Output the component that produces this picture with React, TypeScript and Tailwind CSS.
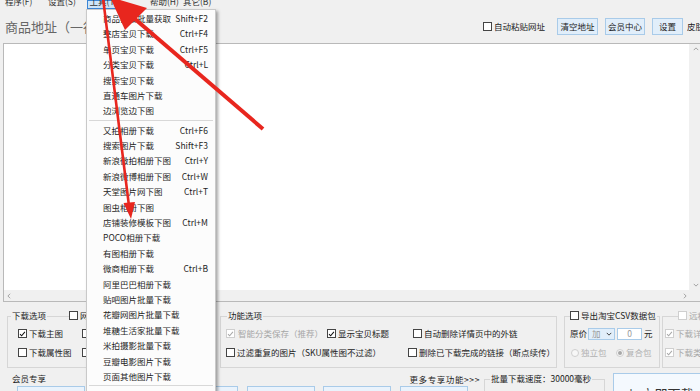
import clsx from 'clsx';
import type { ReactNode } from 'react';

type Item = [string, string?] | null;

const MENU: Item[] = [
  ['商品链接批量获取', 'Shift+F2'],
  ['整店宝贝下载', 'Ctrl+F4'],
  ['单页宝贝下载', 'Ctrl+F5'],
  ['分类宝贝下载', 'Ctrl+L'],
  ['搜索宝贝下载'],
  ['直通车图片下载'],
  ['边浏览边下图'],
  null,
  ['又拍相册下载', 'Ctrl+F6'],
  ['搜索图片下载', 'Shift+F3'],
  ['新浪微拍相册下图', 'Ctrl+Y'],
  ['新浪微博相册下图', 'Ctrl+W'],
  ['天堂图片网下图', 'Ctrl+T'],
  ['图虫相册下图'],
  ['店铺装修模板下图', 'Ctrl+M'],
  ['POCO相册下载'],
  ['有图相册下载'],
  ['微商相册下载', 'Ctrl+B'],
  ['阿里巴巴相册下载'],
  ['贴吧图片批量下载'],
  ['花瓣网图片批量下载'],
  ['堆糖生活家批量下载'],
  ['米拍摄影批量下载'],
  ['豆瓣电影图片下载'],
  ['页面其他图片下载'],
  null,
];

function Box({ checked, disabled }: { checked?: boolean; disabled?: boolean }) {
  return (
    <span
      className={clsx(
        'flex h-[9px] w-[9px] shrink-0 items-center justify-center border bg-white',
        disabled ? 'border-[#cfcfcf]' : 'border-[#444]'
      )}
    >
      {checked && (
        <svg viewBox="0 0 9 9" className="h-[8px] w-[8px]">
          <path d="M1.3 4.6 L3.4 6.8 L7.6 1.8" fill="none" stroke={disabled ? '#a8a8a8' : '#111'} strokeWidth="1.3" />
        </svg>
      )}
    </span>
  );
}

function Check({ label, checked, disabled, className }: { label: string; checked?: boolean; disabled?: boolean; className?: string }) {
  return (
    <div className={clsx('flex items-center gap-[2px] whitespace-nowrap', className)}>
      <Box checked={checked} disabled={disabled} />
      <span className={disabled ? 'text-[#a6a6a6]' : 'text-[#222]'}>{label}</span>
    </div>
  );
}

function Radio({ label, on, className }: { label: string; on?: boolean; className?: string }) {
  return (
    <div className={clsx('flex items-center gap-[2px] whitespace-nowrap text-[#b0b0b0]', className)}>
      <span className="flex h-[8px] w-[8px] items-center justify-center rounded-full border border-[#cfcfcf] bg-[#f7f7f7]">
        {on && <span className="h-[4px] w-[4px] rounded-full bg-[#a8a8a8]" />}
      </span>
      <span>{label}</span>
    </div>
  );
}

function Group({ title, className, children }: { title?: ReactNode; className?: string; children: ReactNode }) {
  return (
    <div className={clsx('relative shrink-0 border border-[#d6d6d6]', className)}>
      {title}
      {children}
    </div>
  );
}

function Btn({ children, className }: { children: ReactNode; className?: string }) {
  return (
    <div className={clsx('flex h-[17px] shrink-0 items-center justify-center border border-[#a9cbe9] bg-[#e1eefa] text-[#222]', className)}>
      {children}
    </div>
  );
}

export default function App() {
  return (
    <div className="relative h-[391px] w-[700px] overflow-hidden bg-[#f0f0f0] font-['Noto_Sans_CJK_SC','Noto_Sans',sans-serif] text-[8.5px] leading-none text-[#222]">
      {/* menu bar */}
      <div className="flex h-[10px] items-start overflow-hidden text-[#333]">
        <span className="-mt-[3px] ml-[5px] w-[43px]">程序(F)</span>
        <span className="-mt-[3px] w-[39px]">设置(S)</span>
        <span className="flex h-[9px] w-[33px] items-start justify-center border border-[#3c86d6] bg-[#cde4f8]">
          <span className="-mt-[4px]">工具(T)</span>
        </span>
        <span className="-mt-[3px] ml-[30px] w-[33px]">帮助(H)</span>
        <span className="-mt-[3px]">其它(B)</span>
      </div>

      {/* address toolbar */}
      <div className="flex h-[33px] items-center">
        <span className="flex-1 whitespace-nowrap pl-[5px] text-[13px] text-[#666]">商品地址（一行一个）</span>
        <div className="flex shrink-0 items-center">
          <Check label="自动粘贴网址" className="gap-[1px]" />
          <Btn className="ml-[12px] w-[41px]">清空地址</Btn>
          <Btn className="ml-[7px] w-[40px]">会员中心</Btn>
          <Btn className="ml-[7px] w-[31px]">设置</Btn>
          <span className="ml-[4px] w-[13px] overflow-hidden whitespace-nowrap">皮肤设置</span>
        </div>
      </div>

      {/* address box */}
      <div className="ml-[3px] flex h-[259px] w-[699px] shrink-0 flex-col border border-[#b9b9b9] bg-white">
        <div className="flex min-h-0 flex-1">
          <div className="flex-1" />
          <div className="flex w-[12px] flex-col items-center justify-between bg-[#f0f0f0] py-[3px] pl-[2px]">
            <svg viewBox="0 0 8 5" className="h-[4px] w-[6px]"><path d="M1 4 L4 1 L7 4" fill="none" stroke="#888" strokeWidth="1" /></svg>
            <svg viewBox="0 0 8 5" className="h-[4px] w-[6px]"><path d="M1 1 L4 4 L7 1" fill="none" stroke="#888" strokeWidth="1" /></svg>
          </div>
        </div>
        <div className="flex h-[11px] items-center justify-between bg-[#f0f0f0] pl-[3px] pr-[14px]">
          <svg viewBox="0 0 5 8" className="h-[6px] w-[4px]"><path d="M4 1 L1 4 L4 7" fill="none" stroke="#888" strokeWidth="1" /></svg>
          <svg viewBox="0 0 5 8" className="h-[6px] w-[4px]"><path d="M1 1 L4 4 L1 7" fill="none" stroke="#888" strokeWidth="1" /></svg>
        </div>
      </div>

      {/* options */}
      <div className="mt-[14px] flex h-[52px]">
        <Group
          className="ml-[7px] w-[207px]"
          title={
            <>
              <span className="absolute -top-[6px] left-[3px] bg-[#f0f0f0] px-[1px]">下载选项</span>
              <div className="absolute -top-[6px] left-[61px] bg-[#f0f0f0]"><Check label="网页详情图" /></div>
            </>
          }
        >
          <div className="pt-[7px]">
            <div className="flex h-[19px] items-center pl-[10px]">
              <Check checked label="下载主图" className="w-[64px]" />
              <Check label="下载详情图" />
            </div>
            <div className="flex h-[19px] items-center pl-[10px]">
              <Check label="下载属性图" className="w-[64px]" />
              <Check label="下载视频" />
            </div>
          </div>
        </Group>

        <Group
          className="ml-[6px] w-[337px]"
          title={<span className="absolute -top-[6px] left-[6px] bg-[#f0f0f0] px-[1px]">功能选项</span>}
        >
          <div className="pt-[7px]">
            <div className="flex h-[19px] items-center pl-[5px]">
              <Check disabled checked label="智能分类保存（推荐）" className="w-[101px] gap-[3px]" />
              <Check checked label="显示宝贝标题" className="w-[86px]" />
              <Check label="自动删除详情页中的外链" />
            </div>
            <div className="flex h-[19px] items-center pl-[5px]">
              <Check label="过滤重复的图片（SKU属性图不过滤）" className="w-[182px]" />
              <Check label="删除已下载完成的链接（断点续传）" />
            </div>
          </div>
        </Group>

        <Group
          className="ml-[7px] w-[96px]"
          title={<div className="absolute -top-[6px] left-[5px] bg-[#f0f0f0] pr-[1px]"><Check label="导出淘宝CSV数据包" /></div>}
        >
          <div className="pt-[7px]">
            <div className="flex h-[19px] items-center pl-[5px]">
              <span>原价</span>
              <div className="ml-[1px] flex h-[12px] w-[27px] items-center justify-between border border-[#a9cbe9] bg-[#e1eefa] pl-[3px] pr-[2px] text-[#999]">
                <span>加</span>
                <svg viewBox="0 0 8 5" className="h-[4px] w-[6px]"><path d="M1 1 L4 4 L7 1" fill="none" stroke="#333" strokeWidth="1.2" /></svg>
              </div>
              <div className="ml-[2px] flex h-[12px] w-[25px] items-center justify-center border border-[#a9cbe9] bg-white text-[#999]">0</div>
              <span className="ml-[2px]">元</span>
            </div>
            <div className="flex h-[19px] items-center pl-[6px]">
              <Radio label="独立包" className="w-[45px]" />
              <Radio on label="复合包" />
            </div>
          </div>
        </Group>

        <Group
          className="ml-[2px] w-[60px]"
          title={<div className="absolute -top-[6px] left-[15px] bg-[#f0f0f0]"><Check disabled label="远程图片" /></div>}
        >
          <div className="pt-[7px]">
            <div className="flex h-[19px] items-center pl-[2px]">
              <Check disabled checked label="下载详情" />
            </div>
            <div className="flex h-[19px] items-center pl-[2px]">
              <Check disabled checked label="下载类目" />
            </div>
          </div>
        </Group>
      </div>

      {/* member row */}
      <div className="flex items-start">
        <div className="ml-[7px] flex w-[477px] shrink-0 flex-col pt-[5px]">
          <div className="flex h-[10px] items-center">
            <span className="pl-[5px]">会员专享</span>
            <span className="ml-auto mt-[3px] pr-[4px] tracking-[0.6px]">更多专享功能&gt;&gt;&gt;</span>
          </div>
          <div className="mt-[3px] flex gap-[8.5px] pl-[10px]">
            {[0, 1, 2, 3, 4, 5].map(i => (
              <div key={i} className="h-[20px] w-[68px] border border-[#a9cbe9] bg-[#eaf3fc]" />
            ))}
          </div>
        </div>
        <div className="relative mt-[11px] h-[30px] w-[121px] shrink-0 border border-[#d6d6d6]">
          <span className="absolute -top-[6px] left-[5px] whitespace-nowrap bg-[#f0f0f0] px-[1px]">批量下载速度：30000毫秒</span>
        </div>
        <div className="ml-[8px] mt-[5px] flex h-[25px] w-[92px] shrink-0 items-start justify-center gap-[4px] border border-[#a9cbe9] bg-[#f4f9fe] pt-[13px] text-[13px] text-[#333]">
          <span>↓</span>
          <span>立即下载</span>
        </div>
      </div>

      {/* dropdown menu */}
      <div className="absolute left-[86px] top-[9px] w-[130px] border border-[#c9c9c9] bg-[#fcfcfc] pb-[20px] pt-[0.6px] shadow-[2px_2px_3px_rgba(0,0,0,0.35)]">
        {MENU.map((m, i) =>
          m ? (
            <div key={i} className="flex h-[15.4px] items-center justify-between pl-[16px] pr-[7px] text-[#1e1e1e]">
              <span>{m[0]}</span>
              {m[1] && <span>{m[1]}</span>}
            </div>
          ) : (
            <div key={i} className="flex h-[3.9px] items-center px-[2px]">
              <div className="h-px w-full bg-[#d8d8d8]" />
            </div>
          )
        )}
      </div>

      {/* red annotation arrows */}
      <svg className="pointer-events-none absolute left-0 top-0 h-[391px] w-[700px]" viewBox="0 0 700 391">
        <line x1="103" y1="-2" x2="129" y2="206" stroke="#e8261e" strokeWidth="2.6" />
        <polygon points="131,219 123.5,203 135,202" fill="#e8261e" />
        <line x1="263" y1="129" x2="128" y2="13" stroke="#e8261e" strokeWidth="4" />
        <polygon points="110,-3 147,8 125,30" fill="#e8261e" />
      </svg>
    </div>
  );
}
